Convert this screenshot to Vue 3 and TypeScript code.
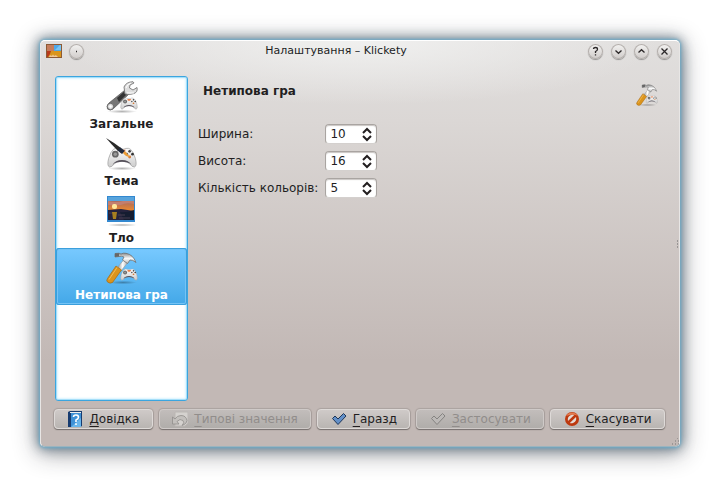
<script setup lang="ts">
import { computed, ref } from 'vue'

interface Page { id: string; label: string }
interface Field { id: string; label: string; value: number; min: number; max: number }
interface Action { id: string; key: string; rest: string; disabled: boolean }

const pages: Page[] = [
  { id: 'general', label: 'Загальне' },
  { id: 'theme', label: 'Тема' },
  { id: 'background', label: 'Тло' },
  { id: 'custom', label: 'Нетипова гра' },
]
const current = ref('custom')
const heading = computed(() => pages.find((p) => p.id === current.value)?.label ?? '')

const fields = ref<Field[]>([
  { id: 'width', label: 'Ширина:', value: 10, min: 4, max: 40 },
  { id: 'height', label: 'Висота:', value: 16, min: 4, max: 40 },
  { id: 'colors', label: 'Кількість кольорів:', value: 5, min: 2, max: 7 },
])
function step(field: Field, by: number): void {
  field.value = Math.min(field.max, Math.max(field.min, field.value + by))
}

const actions: Action[] = [
  { id: 'help', key: 'Д', rest: 'овідка', disabled: false },
  { id: 'defaults', key: 'Т', rest: 'ипові значення', disabled: true },
  { id: 'ok', key: 'Г', rest: 'аразд', disabled: false },
  { id: 'apply', key: 'З', rest: 'астосувати', disabled: true },
  { id: 'cancel', key: 'С', rest: 'касувати', disabled: false },
]
</script>

<template>
  <div class="desktop">
    <svg class="defs" width="0" height="0" aria-hidden="true">
      <defs>
        <linearGradient id="steel" x1="0" y1="0" x2="1" y2="0">
          <stop offset="0" stop-color="#888" /><stop offset=".5" stop-color="#fff" /><stop offset="1" stop-color="#999" />
        </linearGradient>
        <linearGradient id="head" x1="0" y1="0" x2="0" y2="1">
          <stop offset="0" stop-color="#8a8a8a" /><stop offset=".5" stop-color="#fafafa" /><stop offset="1" stop-color="#bbb" />
        </linearGradient>
        <linearGradient id="pad" x1="0" y1="0" x2="0" y2="1">
          <stop offset="0" stop-color="#fdfdfd" /><stop offset="1" stop-color="#cccccc" />
        </linearGradient>
        <linearGradient id="sky" x1="0" y1="0" x2="0" y2="1">
          <stop offset="0" stop-color="#a86a60" /><stop offset="1" stop-color="#f08a2c" />
        </linearGradient>
        <radialGradient id="floor">
          <stop offset="0" stop-color="#000" stop-opacity=".3" /><stop offset="1" stop-color="#000" stop-opacity="0" />
        </radialGradient>
        <symbol id="gamepad" viewBox="0 0 32 22">
          <path d="M7 2.500Q9 .8 12 1.500L14 2.300H18L20 1.500Q23 .8 25 2.500Q28 5 30 12Q32 20 29 21Q27 21.500 24 17.500Q22 15 16 15T8 17.500Q5 21.500 3 21Q0 20 2 12Q4 5 7 2.500Z" fill="url(#pad)" stroke="#a2a2a2" stroke-width=".8" />
          <path d="M6 18.500Q9 13.500 16 13.500T26 18.500Q22 15.500 16 15.500T6 18.500Z" fill="#55505a" />
          <circle cx="9" cy="7.500" r="3.500" fill="#666" /><circle cx="9" cy="7.500" r="1.800" fill="#999" />
          <path d="M13 3H20L18 6H14Z" fill="#e9804c" />
          <circle cx="24" cy="4.500" r="1.400" fill="#444" /><circle cx="27" cy="7.500" r="1.400" fill="#333" />
          <circle cx="21" cy="7.500" r="1.400" fill="#555" /><circle cx="24" cy="10.500" r="1.500" fill="#d87833" />
        </symbol>
        <symbol id="hammer" viewBox="0 0 32 32">
          <ellipse cx="17" cy="30.500" rx="14" ry="1.800" fill="url(#floor)" />
          <path d="M18.500 7L22.500 9.500L15 19L11 16Z" fill="url(#steel)" stroke="#999" stroke-width=".6" />
          <path d="M10 14L15.500 18L6.500 30.500Q4 32 1.500 30Q0 28.500 1.500 26.500Z" fill="#db941c" stroke="#a76810" stroke-width=".7" />
          <path d="M11 15.500L3 27.500" stroke="#f3bd57" />
          <path d="M9 1.500L13 1.200L15 2Q17 .8 20 1.300Q27 2.500 30 10.500Q26.500 7.500 24 8L21.500 11.500L16.500 8L18 5Q15.500 3.800 13 4.500L9 5Z" fill="url(#head)" stroke="#707070" stroke-width=".8" stroke-linejoin="round" />
          <path d="M9 1.500L13 1.200V4.500L9 5Z" fill="#666" />
          <use href="#gamepad" x="14" y="16" width="18" height="13" />
        </symbol>
      </defs>
    </svg>

    <main class="window">
      <header class="titlebar">
        <div class="side">
          <svg class="app-icon" viewBox="0 0 16 14" aria-hidden="true">
            <rect width="16" height="14" fill="#8c5a35" />
            <rect x="1" y="1" width="7" height="6" fill="#c57d5d" />
            <rect x="8" y="1" width="7" height="6" fill="#4fa8e8" /><path d="M9 6L14 1H15V6Z" fill="#79c5f5" />
            <path d="M1 7H5V13H1Z" fill="#b83a1c" /><path d="M5 7H15V13H2L4 10Z" fill="#d9951c" />
            <path d="M3 13Q4 10 6 12Q7 9 8 12Q10 10 12 13Z" fill="#f2c795" />
          </svg>
          <button class="round" type="button" aria-label="Меню"><svg viewBox="0 0 15 15"><path d="M7 7.500H8" /></svg></button>
        </div>
        <h1>Налаштування – Klickety</h1>
        <div class="side controls">
          <button class="round" type="button" aria-label="Довідка">
            <svg viewBox="0 0 15 15"><path d="M5.500 5Q5.500 3.500 7.500 3.500T9.500 5.200Q9.500 6.500 7.500 7.500V9M7.500 10.300V11.500" /></svg>
          </button>
          <button class="round" type="button" aria-label="Мінімізувати"><svg viewBox="0 0 15 15"><path d="M4.500 6.500L7.500 9.300L10.500 6.500" /></svg></button>
          <button class="round" type="button" aria-label="Максимізувати"><svg viewBox="0 0 15 15"><path d="M4.500 8.500L7.500 5.700L10.500 8.500" /></svg></button>
          <button class="round" type="button" aria-label="Закрити"><svg viewBox="0 0 15 15"><path d="M4.500 4.500L10.500 10.500M10.500 4.500L4.500 10.500" /></svg></button>
        </div>
      </header>

      <div class="content">
        <nav class="pages">
          <button v-for="page in pages" :key="page.id" type="button" class="page" :class="{ selected: page.id === current }" @click="current = page.id">
            <svg class="page-icon" viewBox="0 0 32 32" aria-hidden="true">
              <template v-if="page.id === 'general'">
                <ellipse cx="16" cy="30.500" rx="15" ry="1.800" fill="url(#floor)" />
                <path d="M3 22L19 9L23 13L7 28Q4 30 1.500 28Q0 25 3 22Z" fill="#777" stroke="#555" stroke-width=".7" />
                <path d="M11 17L20 9L22.500 11.500L13 21Z" fill="#333" />
                <circle cx="4.500" cy="25.500" r="3.200" fill="#ddd" stroke="#666" /><circle cx="4.500" cy="25.500" r="1.200" fill="#fff" />
                <path d="M19 13L18 6Q20 1 27 .7L28 2L24 4L23.500 7L27 9L31 6.500Q32 11 28 12.500Q25 14 19 13Z" fill="#dedede" stroke="#777" stroke-width=".9" />
                <path d="M20 7Q21 3 25 2M21 12H28" fill="none" stroke="#fff" />
                <use href="#gamepad" x="14" y="16" width="18" height="13" />
              </template>
              <template v-else-if="page.id === 'theme'">
                <ellipse cx="16" cy="30.500" rx="14" ry="1.800" fill="url(#floor)" />
                <use href="#gamepad" x="0" y="9" width="32" height="21" />
                <path d="M0 0Q7 4 15 10L12 13Q6 7 0 0Z" fill="#292929" />
                <path d="M11.500 12.500L14.500 9.500L19 13L16 16Z" fill="#20293c" />
                <path d="M17 15L19 13L24 19Q20 19 17 15Z" fill="#eb9c36" />
              </template>
              <template v-else-if="page.id === 'background'">
                <ellipse cx="16" cy="30" rx="15" ry="1.600" fill="url(#floor)" />
                <rect x="1" y="1" width="28" height="26" fill="#3288d0" />
                <rect x="2" y="2" width="26" height="4" fill="#58a4dc" />
                <rect x="2" y="6" width="26" height="10" fill="url(#sky)" />
                <path d="M2 6Q10 8 17 6H28V9Q20 7 15 10H2Z" fill="#c27f70" />
                <path d="M2 15L15 14L28 16V25H2Z" fill="#25233d" />
                <path d="M14 17Q20 18 28 15V25H18Z" fill="#151d31" />
                <rect x="6" y="9" width="5" height="5" rx="2" fill="#ffe89b" />
                <path d="M6 17H11L10 24H7Z" fill="#a77f20" />
                <path d="M3 18H6M12 20H19M13 23H24" stroke="#493e50" />
              </template>
              <use v-else href="#hammer" width="32" height="32" />
            </svg>
            <span>{{ page.label }}</span>
          </button>
        </nav>

        <section class="panel">
          <div class="panel-head">
            <h2>{{ heading }}</h2>
            <svg class="panel-icon" viewBox="0 0 32 32" aria-hidden="true"><use href="#hammer" width="32" height="32" /></svg>
          </div>
          <div class="form">
            <template v-for="field in fields" :key="field.id">
              <label :for="field.id">{{ field.label }}</label>
              <div class="spin">
                <input :id="field.id" v-model.number="field.value" type="number" :min="field.min" :max="field.max" />
                <div class="arrows">
                  <button type="button" aria-label="Більше" @click="step(field, 1)"><svg viewBox="0 0 10 7"><path d="M1 6L5 2L9 6" /></svg></button>
                  <button type="button" aria-label="Менше" @click="step(field, -1)"><svg viewBox="0 0 10 7"><path d="M1 1L5 5L9 1" /></svg></button>
                </div>
              </div>
            </template>
          </div>
        </section>
      </div>

      <footer class="actions">
        <button v-for="action in actions" :key="action.id" type="button" class="action" :disabled="action.disabled">
          <svg viewBox="0 0 16 16" aria-hidden="true">
            <template v-if="action.id === 'help'">
              <path d="M1 1L3 0H15V15L13 16H1Z" fill="#173c70" />
              <rect x="4" y="2" width="10" height="14" fill="#3f91d6" /><path d="M3 1.500H14" stroke="#eee" />
              <path d="M4 16L14 7V16Z" fill="#69b5eb" />
              <path d="M6.500 6Q6.500 4 9 4T11.500 6.300Q11.500 8 9 9V11M9 12.300V14" fill="none" stroke="#fff" stroke-width="1.600" />
            </template>
            <template v-else-if="action.id === 'defaults'">
              <path d="M3 1H16V12L13 15H3Z" fill="#d5d2cf" stroke="#bbb7b4" />
              <path d="M0.500 6V13H7L5 10.500Q8 7 11 9.500Q13 11.500 10 14.500Q15 13 15 9.500Q14 4.500 9 4.500Q5 4.500 3 8Z" fill="#c3c0bd" stroke="#918e8b" stroke-width=".8" />
            </template>
            <path v-else-if="action.id === 'ok'" d="M1.500 7.500L4 5L7 8L12.500 2.500L15 5L7 13.500Z" fill="#6390c8" stroke="#1e3658" stroke-linejoin="round" />
            <path v-else-if="action.id === 'apply'" d="M1.500 7.500L4 5L7 8L12.500 2.500L15 5L7 13.500Z" fill="#bcb9b7" stroke="#858381" stroke-linejoin="round" />
            <template v-else>
              <circle cx="8" cy="8" r="7" fill="#bd390f" />
              <path d="M2 5Q4 1.500 8 1.500T14 5Q10 2.500 2 5Z" fill="#e27b50" />
              <path d="M4 10Q3 6 6.500 4.200Q8.500 3.300 10.200 4Z" fill="#e4dcd7" />
              <path d="M12 6Q13 10 9.500 11.800Q7.500 12.700 5.800 12Z" fill="#e4dcd7" />
            </template>
          </svg>
          <span><u>{{ action.key }}</u>{{ action.rest }}</span>
        </button>
      </footer>
      <svg class="handle" viewBox="0 0 4 8" aria-hidden="true"><path d="M1 1H2M1 4H2M1 7H2" stroke="#666" /></svg>
      <svg class="grip" viewBox="0 0 8 8" aria-hidden="true"><path d="M1 6H2M4 6H5M4 3H5M7 6H8M6 0H7M7 3H8" stroke="#777" /></svg>
    </main>
  </div>
</template>

<style>
body { background: #fff; }
</style>

<style scoped>
* { box-sizing: border-box; }
.desktop {
  min-height: 100vh; padding: 40px; display: flex;
  font: 12px/16px "DejaVu Sans", sans-serif; color: #221e1f;
}
.defs { position: absolute; }
.window {
  position: relative; flex: 1; min-width: 0; display: flex; flex-direction: column;
  border-radius: 5px; border: 1px solid #e8e6e5; border-top-color: #fff; border-bottom-color: #9bb4bf;
  background:
    radial-gradient(ellipse 300px 64px at 50% 0, #f0f0ef, rgba(240, 240, 239, 0)),
    linear-gradient(#e1dfde, #dbd7d5 80px, #c2b8b5 320px);
  box-shadow: 0 0 3px 1px #6dadcb, 0 0 12px 2px rgba(50, 80, 100, .6), 0 4px 24px 2px rgba(30, 30, 40, .45);
}
button { font: inherit; color: inherit; padding: 0; border: 0; background: none; }
.titlebar { display: flex; align-items: center; height: 20px; padding: 0 7px 0 5px; }
.side { display: flex; align-items: center; gap: 7px; }
.controls { gap: 8px; }
.app-icon { width: 16px; height: 14px; }
h1 { flex: 1; margin: 0; text-align: center; font-size: 11px; font-weight: 400; line-height: 16px; }
.round {
  width: 15px; height: 15px; border-radius: 50%;
  background: linear-gradient(#f4f3f2, #cfcbc9);
  box-shadow: inset 0 0 0 1px #b4afac, 0 1px 1px rgba(0, 0, 0, .35);
}
.round svg { display: block; width: 15px; height: 15px; fill: none; stroke: #2c2829; stroke-width: 1.3; }
.content { flex: 1; display: flex; gap: 9px; padding: 15px 14px 0; }
.pages {
  width: 133px; display: flex; flex-direction: column;
  border: 1px solid #3ba5df; border-radius: 3px; background: #fff;
  box-shadow: inset 0 0 0 1px #a5dff9, inset 0 0 2px 2px #d9f3ff;
}
.page {
  height: 57px; padding-top: 4px; display: flex; flex-direction: column; align-items: center; gap: 3px;
  font-weight: 700; border-radius: 3px;
}
.page.selected {
  color: #fff; background: linear-gradient(#78c9ff, #43a8e8);
  box-shadow: inset 0 0 0 1px #3b9fdc, inset 0 0 0 2px #74c3f5;
}
.page-icon { width: 32px; height: 32px; flex: none; }
.panel { flex: 1; min-width: 0; }
.panel-head { display: flex; align-items: center; justify-content: space-between; padding: 7px 7px 0 6px; }
h2 { margin: 0 0 8px; font-size: 12px; line-height: 16px; }
.panel-icon { width: 22px; height: 22px; }
.form {
  display: grid; grid-template-columns: max-content 52px; align-items: center;
  gap: 7px; padding: 17px 1px 0;
}
.spin {
  height: 20px; display: flex; align-items: center; border-radius: 4px; background: #fff;
  border: 1px solid #a9a4a1; border-bottom-color: #d4d0ce;
  box-shadow: inset 0 1px 1px #c9c5c3;
}
input {
  flex: 1; min-width: 0; height: 18px; padding: 0 0 0 4px; border: 0; outline: 0; background: none;
  font: inherit; color: inherit; appearance: textfield;
}
input::-webkit-inner-spin-button { appearance: none; margin: 0; }
.arrows { display: flex; flex-direction: column; gap: 1px; margin-right: 4px; }
.arrows button, .arrows svg { display: block; width: 10px; height: 7px; }
.arrows svg { fill: none; stroke: #221e1f; stroke-width: 2; }
.actions { display: flex; gap: 6px; padding: 8px 14px 17px 13px; }
.action {
  flex: 1 1 auto; height: 20px; display: flex; align-items: center; justify-content: center; gap: 6px; white-space: nowrap;
  border: 1px solid #dedad8; border-radius: 4px;
  background: linear-gradient(#cfcac8, #b9b5b2);
  box-shadow: 0 1px 1px #77716f, 0 0 1px 1px #aaa29f;
}
.action svg { width: 16px; height: 16px; flex: none; }
.action:disabled { color: #918d8b; background: linear-gradient(#c2bdbb, #b0adaa); border-color: #cfcac8; }
u { text-decoration: underline; text-decoration-skip-ink: none; text-underline-offset: 3px; }
.handle { position: absolute; right: -1px; top: 199px; width: 4px; height: 8px; }
.grip { position: absolute; right: 0; bottom: 0; width: 8px; height: 8px; }
</style>
